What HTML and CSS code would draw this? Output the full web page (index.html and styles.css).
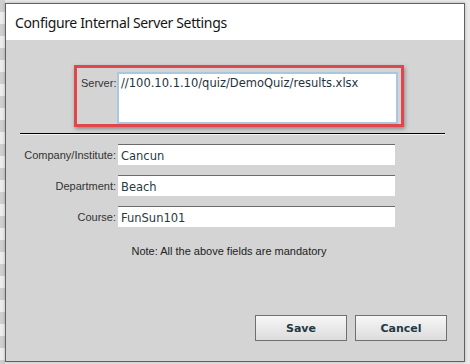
FILE: index.html
```html
<!DOCTYPE html>
<html>
<head>
<title>Configure Internal Server Settings</title>
<link rel="stylesheet" href="styles.css">
</head>
<body>
    <div class="backdrop">
        <div class="dialog">
            <div class="dialog-head">Configure Internal Server Settings</div>

            <div class="dialog-body">
                <div class="highlight">
                    <label class="server-label" for="server">Server:</label>
                    <textarea class="server-box" id="server">//100.10.1.10/quiz/DemoQuiz/results.xlsx</textarea>
                </div>

                <hr class="divider">

                <div class="fields">
                    <label class="field-label">Company/Institute:</label>
                    <input class="field" type="text" value="Cancun">
                    <label class="field-label">Department:</label>
                    <input class="field" type="text" value="Beach">
                    <label class="field-label">Course:</label>
                    <input class="field" type="text" value="FunSun101">
                </div>

                <p class="note">Note: All the above fields are mandatory</p>

                <div class="botonera">
                    <button class="button">Save</button>
                    <button class="button">Cancel</button>
                </div>
            </div>
        </div>
    </div>
</body>
</html>
```

FILE: styles.css
```css
body {
    margin: 0;
    background-color: #e9e9e9;
    font-family: "Liberation Sans", Arial, sans-serif;
}

.backdrop {
    width: 470px;
    height: 364px;
    padding: 3px 0 0 5px;
    box-sizing: border-box;
    background: repeating-linear-gradient(180deg, #cfcfcf 0, #cfcfcf 12px, #ececec 12px, #ececec 24px);
    background-size: 5px 100%;
    background-repeat: no-repeat;
}

.dialog {
    width: 460px;
    height: 359px;
    box-sizing: border-box;
    border: 1px solid #5f6360;
    display: flex;
    flex-direction: column;
    box-shadow: 0 0 3px rgba(0, 0, 0, 0.25);
}

.dialog-head {
    height: 36px;
    background-color: #fff;
    padding-left: 9px;
    display: flex;
    align-items: center;
    font-family: "Noto Sans", sans-serif;
    font-size: 14px;
    letter-spacing: -0.35px;
    color: #151515;
}

.dialog-body {
    flex: 1;
    background-color: #d4d4d4;
    padding-top: 25px;
    display: flex;
    flex-direction: column;
}

.highlight {
    margin-left: 68px;
    width: 330px;
    height: 62px;
    box-sizing: border-box;
    border: 3px solid #e0474c;
    padding: 4px 0 0 4px;
    display: flex;
    box-shadow: 1px 2px 4px rgba(0, 0, 0, 0.35);
}

.server-label {
    font-size: 11px;
    color: #333;
    width: 36px;
    white-space: nowrap;
    padding-top: 5px;
}

.server-box {
    width: 281px;
    height: 52px;
    box-sizing: border-box;
    border: 2px solid #a9c7e0;
    padding: 2px 2px;
    resize: none;
    font-family: "DejaVu Sans", Verdana, sans-serif;
    font-size: 11.5px;
    color: #1f3340;
}

.divider {
    margin: 6px 0 0 14px;
    width: 425px;
    height: 0;
    border: none;
    border-top: 1px solid #000;
    border-bottom: 1px solid #f4f4f4;
}

.fields {
    margin-top: 9px;
    display: grid;
    grid-template-columns: 110px 277px;
    column-gap: 2px;
    row-gap: 10px;
    align-items: center;
}

.field-label {
    text-align: right;
    font-size: 11px;
    color: #333;
}

.field {
    height: 21px;
    box-sizing: border-box;
    margin: 0;
    border: none;
    border-top: 1px solid #6b6b6b;
    padding: 1px 3px 0;
    background-color: #fff;
    font-family: "DejaVu Sans", Verdana, sans-serif;
    font-size: 11.5px;
    color: #1f3a44;
}

.note {
    margin: 18px 0 0 0;
    padding-right: 12px;
    text-align: center;
    font-size: 11px;
    color: #222;
}

.botonera {
    margin-top: auto;
    margin-bottom: 20px;
    padding-right: 17px;
    display: flex;
    justify-content: flex-end;
    gap: 8px;
}

.button {
    width: 92px;
    height: 26px;
    border: 1px solid #707070;
    background: linear-gradient(#f7f7f7, #dcdcdc);
    font-family: "DejaVu Sans", Verdana, sans-serif;
    font-size: 11px;
    font-weight: bold;
    color: #1f3a44;
    cursor: pointer;
}
```
